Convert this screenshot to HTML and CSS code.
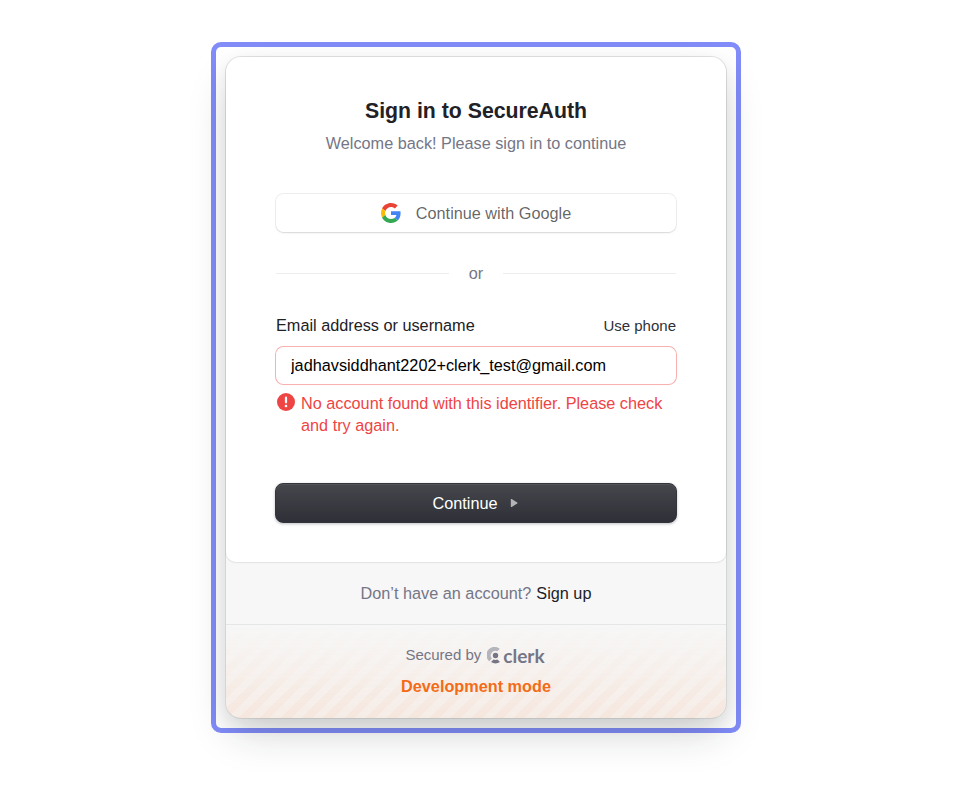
FILE: index.html
```html
<!DOCTYPE html>
<html lang="en">
<head>
<meta charset="utf-8">
<title>Sign in to SecureAuth</title>
<link rel="stylesheet" href="styles.css">
</head>
<body>
<div class="frame">
  <div class="card">
    <main class="panel">
      <h1 class="title">Sign in to SecureAuth</h1>
      <p class="subtitle">Welcome back! Please sign in to continue</p>
      <button class="google" type="button">
        <svg class="google-icon" viewBox="0 0 48 48">
          <path fill="#EA4335" d="M24 9.5c3.54 0 6.71 1.22 9.21 3.6l6.85-6.85C35.9 2.38 30.47 0 24 0 14.62 0 6.51 5.38 2.56 13.22l7.98 6.19C12.43 13.72 17.74 9.5 24 9.5z"/>
          <path fill="#4285F4" d="M46.98 24.55c0-1.57-.15-3.09-.38-4.55H24v9.02h12.94c-.58 2.96-2.26 5.48-4.78 7.18l7.73 6c4.51-4.18 7.09-10.36 7.09-17.65z"/>
          <path fill="#FBBC05" d="M10.53 28.59c-.48-1.45-.76-2.99-.76-4.59s.27-3.14.76-4.59l-7.98-6.19C.92 16.46 0 20.12 0 24c0 3.88.92 7.54 2.56 10.78l7.97-6.19z"/>
          <path fill="#34A853" d="M24 48c6.48 0 11.93-2.13 15.89-5.81l-7.73-6c-2.15 1.45-4.92 2.3-8.16 2.3-6.26 0-11.57-4.22-13.47-9.91l-7.98 6.19C6.51 42.62 14.62 48 24 48z"/>
        </svg>
        <span>Continue with Google</span>
      </button>
      <div class="divider"><span>or</span></div>
      <div class="label-row">
        <label for="identifier">Email address or username</label>
        <a class="use-phone">Use phone</a>
      </div>
      <input class="field" id="identifier" type="text" value="jadhavsiddhant2202+clerk_test@gmail.com">
      <div class="error">
        <svg class="error-icon" viewBox="0 0 18 18">
          <circle cx="9" cy="9" r="9" fill="#ef4444"/>
          <path d="M9 4.700v4.600" stroke="#fff" stroke-width="2.200" stroke-linecap="round"/>
          <circle cx="9" cy="13" r="1.300" fill="#fff"/>
        </svg>
        <p>No account found with this identifier. Please check and try again.</p>
      </div>
      <button class="continue" type="button">
        <span>Continue</span>
        <svg class="arrow" viewBox="0 0 8 8"><path d="M.8.6v6.800c0 .5.5.7.9.5l5.500-3.400c.4-.3.4-.7 0-1L1.700.1C1.300-.1.8.1.8.6z" fill="#fff" fill-opacity=".62"/></svg>
      </button>
    </main>
    <div class="signup"><span>Don’t have an account?</span><a>Sign up</a></div>
    <footer class="secured">
      <div class="brand">
        <span>Secured by</span>
        <svg class="mark" viewBox="0 0 14 17">
          <path d="M12.800 1.800A8.100 8.100 0 0 0 2.200 14.200L4.900 11.500A4.600 4.600 0 0 1 10.300 4.300Z" fill="#747686" fill-opacity=".5"/>
          <circle cx="8.500" cy="8.500" r="2.700" fill="#747686"/>
          <path d="M10.500 12.500a4.700 4.700 0 0 1-4 0L4 15a8.200 8.200 0 0 0 9 0Z" fill="#747686"/>
        </svg>
        <span class="wordmark">clerk</span>
      </div>
      <p class="mode">Development mode</p>
    </footer>
  </div>
</div>
</body>
</html>
```
FILE: styles.css
```css
* { box-sizing: border-box; }
body {
  margin: 0;
  height: 788px;
  overflow: hidden;
  background: #fff;
  font-family: "Liberation Sans", Arial, sans-serif;
  font-size: 16.25px;
  line-height: 22.5px;
  color: #212126;
}
h1, p { margin: 0; }
button, input { font: inherit; border: 0; }
.frame {
  width: 530px;
  height: 691px;
  margin: 42px 0 0 211px;
  padding: 10px;
  border: 5px solid #818cf8;
  border-radius: 10px;
}
.card {
  width: 500px;
  height: 661px;
  border-radius: 15px;
  background: #f7f7f7;
  box-shadow: 0 6.25px 18.75px rgba(0,0,0,.08), 0 18.75px 43.75px -6.25px rgba(25,28,33,.2), 0 0 0 1px rgba(0,0,0,.07);
}
.panel {
  display: flex;
  flex-direction: column;
  height: 505px;
  padding: 39px 50px 0;
  border-radius: 15px 15px 10px 10px;
  background: #fff;
  box-shadow: 0 1px 2px rgba(25,28,33,.06), 0 0 0 1px rgba(0,0,0,.03);
}
.title {
  font-size: 21.25px;
  line-height: 30px;
  font-weight: 700;
  text-align: center;
}
.subtitle {
  margin-top: 6px;
  line-height: 22px;
  text-align: center;
  color: #747686;
}
.google {
  display: flex;
  align-items: center;
  justify-content: center;
  gap: 15px;
  height: 38px;
  margin-top: 40px;
  padding: 0;
  border-radius: 7.5px;
  background: #fff;
  color: rgba(0,0,0,.62);
  box-shadow: 0 0 0 1px rgba(0,0,0,.07), 0 2px 3px -1px rgba(0,0,0,.08), 0 1px 0 rgba(0,0,0,.02);
}
.google-icon { width: 20px; height: 20px; }
.divider {
  display: flex;
  align-items: center;
  gap: 20px;
  height: 22px;
  margin-top: 30px;
  color: #747686;
}
.divider::before, .divider::after {
  content: "";
  flex: 1;
  height: 1px;
  background: #ededed;
}
.label-row {
  display: flex;
  align-items: center;
  justify-content: space-between;
  height: 23px;
  margin-top: 30px;
}
.use-phone { padding-top: 2px; font-size: 15px; color: #2f3037; }
.field {
  height: 37px;
  margin-top: 10px;
  padding: 0 15px 1px;
  border-radius: 7.5px;
  background: #fff;
  color: #000;
  outline: 0;
  box-shadow: 0 0 0 1px #f9b0b0, 0 1px 1px rgba(239,68,68,.2);
}
.error {
  display: flex;
  gap: 6px;
  height: 46px;
  margin-top: 8px;
  padding-left: 1px;
  line-height: 22px;
  color: #ef4444;
}
.error-icon { flex: none; width: 18px; height: 18px; margin-top: 1px; }
.error p { width: 375px; }
.continue {
  display: flex;
  align-items: center;
  justify-content: center;
  gap: 12px;
  height: 40px;
  margin: 45px -1px 0;
  padding: 0 2px 0 0;
  border: 1px solid #34353c;
  border-radius: 8px;
  color: #fff;
  background: linear-gradient(#46474d, #2f3037);
  box-shadow: inset 0 1px 0 rgba(255,255,255,.07), 0 1px 3px rgba(34,42,53,.3);
}
.arrow { width: 8px; height: 8px; }
.signup {
  display: flex;
  align-items: center;
  justify-content: center;
  gap: 5px;
  height: 62px;
  color: #747686;
}
.signup a { color: #212126; }
.secured {
  position: relative;
  height: 94px;
  padding-top: 19px;
  border-top: 1px solid #e6e6e6;
  border-radius: 0 0 15px 15px;
  overflow: hidden;
}
.secured::before {
  content: "";
  position: absolute;
  inset: 0;
  background: repeating-linear-gradient(-45deg, rgba(243,107,22,.07), rgba(243,107,22,.07) 7.5px, rgba(243,107,22,.11) 7.5px, rgba(243,107,22,.11) 15px);
  mask-image: linear-gradient(transparent, #000);
}
.brand {
  position: relative;
  display: flex;
  align-items: center;
  justify-content: center;
  height: 22px;
  padding-right: 2px;
  font-size: 15px;
  color: #747686;
}
.mark { width: 14px; height: 17px; margin: 1px 2px 0 6px; }
.wordmark {
  padding-top: 2px;
  font-family: Lato, sans-serif;
  font-size: 19px;
  font-weight: 700;
  line-height: 22px;
}
.mode {
  position: relative;
  margin-top: 9px;
  font-weight: 700;
  text-align: center;
  color: #f36b16;
}
```
